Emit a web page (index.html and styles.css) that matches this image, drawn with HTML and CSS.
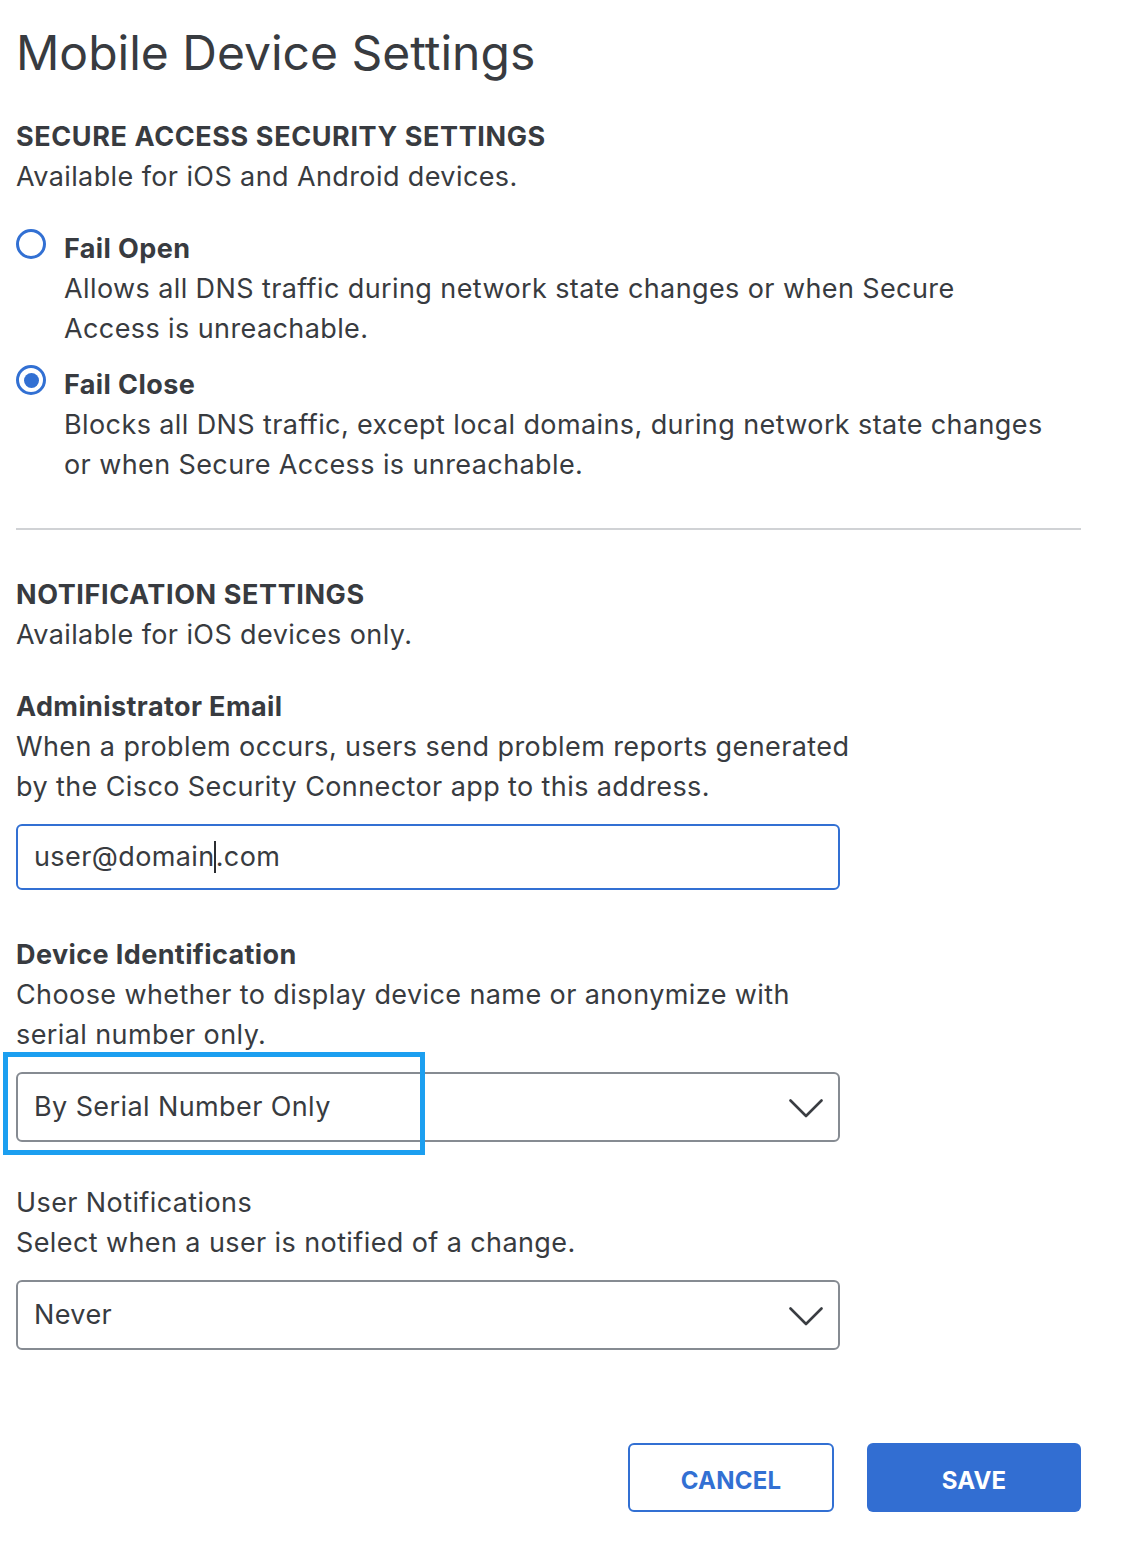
FILE: index.html
```html
<!DOCTYPE html>
<html lang="en">
<head>
<meta charset="utf-8">
<title>Mobile Device Settings</title>
<link rel="stylesheet" href="styles.css">
</head>
<body>
<main class="page">
  <h1 class="title">Mobile Device Settings</h1>

  <section class="section">
    <h2 class="section-title">SECURE ACCESS SECURITY SETTINGS</h2>
    <p class="text">Available for iOS and Android devices.</p>

    <div class="radio-group">
      <div class="radio-row">
        <span class="radio"></span>
        <div class="radio-body">
          <div class="label-bold">Fail Open</div>
          <p class="text">Allows all DNS traffic during network state changes or when Secure<br>Access is unreachable.</p>
        </div>
      </div>
      <div class="radio-row">
        <span class="radio checked"><span class="dot"></span></span>
        <div class="radio-body">
          <div class="label-bold">Fail Close</div>
          <p class="text">Blocks all DNS traffic, except local domains, during network state changes<br>or when Secure Access is unreachable.</p>
        </div>
      </div>
    </div>
  </section>

  <hr class="divider">

  <section class="section notif">
    <h2 class="section-title">NOTIFICATION SETTINGS</h2>
    <p class="text">Available for iOS devices only.</p>

    <div class="field">
      <div class="label-bold">Administrator Email</div>
      <p class="text">When a problem occurs, users send problem reports generated<br>by the Cisco Security Connector app to this address.</p>
      <div class="input focused">user@domain<span class="caret"></span>.com</div>
    </div>

    <div class="field">
      <div class="label-bold">Device Identification</div>
      <p class="text">Choose whether to display device name or anonymize with<br>serial number only.</p>
      <div class="select-wrap">
        <div class="select">
          <span>By Serial Number Only</span>
          <svg class="chev" width="34" height="19" viewBox="0 0 34 19"><path d="M1.5 1.5 L17 17 L32.5 1.5" fill="none" stroke="#3a3d42" stroke-width="2.6" stroke-linecap="round" stroke-linejoin="round"/></svg>
        </div>
        <div class="highlight"></div>
      </div>
    </div>

    <div class="field field-last">
      <div class="label-normal">User Notifications</div>
      <p class="text">Select when a user is notified of a change.</p>
      <div class="select">
        <span>Never</span>
        <svg class="chev" width="34" height="19" viewBox="0 0 34 19"><path d="M1.5 1.5 L17 17 L32.5 1.5" fill="none" stroke="#3a3d42" stroke-width="2.6" stroke-linecap="round" stroke-linejoin="round"/></svg>
      </div>
    </div>
  </section>

  <div class="actions">
    <button class="btn btn-outline">CANCEL</button>
    <button class="btn btn-primary">SAVE</button>
  </div>
</main>
</body>
</html>
```

FILE: styles.css
```css
html, body {
  margin: 0;
  padding: 0;
  background: #ffffff;
}

body {
  font-family: Inter, "Noto Sans", "Liberation Sans", sans-serif;
  color: #383b40;
  font-size: 27px;
  line-height: 40px;
  letter-spacing: 0.4px;
}

.page {
  width: 1065px;
  padding: 25px 0 0 16px;
}

.title {
  margin: 0;
  font-size: 48px;
  line-height: 56px;
  font-weight: 400;
  letter-spacing: 0;
}

.section {
  margin-top: 36px;
}

.section-title {
  margin: 0;
  font-size: 27px;
  line-height: 40px;
  font-weight: 700;
  letter-spacing: 0.6px;
}

.text {
  margin: 0;
  white-space: nowrap;
}

.radio-group {
  margin-top: 32px;
  display: flex;
  flex-direction: column;
  gap: 16px;
}

.radio-row {
  display: flex;
  align-items: flex-start;
  gap: 18px;
}

.radio {
  flex: none;
  width: 30px;
  height: 30px;
  margin-top: 0;
  box-sizing: border-box;
  border: 3px solid #3270d3;
  border-radius: 50%;
  display: flex;
  align-items: center;
  justify-content: center;
}

.radio .dot {
  width: 15px;
  height: 15px;
  border-radius: 50%;
  background: #3270d3;
}

.label-bold {
  font-weight: 700;
}

.label-normal {
  font-weight: 400;
}

.divider {
  margin: 43px 0 0 0;
  border: 0;
  height: 2px;
  background: #d0d2d5;
}

.notif {
  margin-top: 45px;
}

.field {
  margin-top: 32px;
}

.field + .field {
  margin-top: 45px;
}

.field-last {
  margin-top: 41px !important;
}

.input {
  margin-top: 17px;
  width: 824px;
  height: 66px;
  box-sizing: border-box;
  border: 2px solid #3270d3;
  border-radius: 6px;
  padding: 0 16px;
  display: flex;
  align-items: center;
}

.caret {
  display: inline-block;
  width: 2px;
  height: 32px;
  background: #2b2d31;
  margin: 0 0 0 -1px;
}

.select-wrap {
  position: relative;
  margin-top: 17px;
  width: 824px;
}

.select {
  width: 824px;
  height: 70px;
  box-sizing: border-box;
  border: 2px solid #868b92;
  border-radius: 6px;
  padding: 0 15px 0 16px;
  display: flex;
  align-items: center;
  justify-content: space-between;
}

.field-last .select {
  margin-top: 17px;
}

.chev {
  display: block;
  margin-top: 2px;
}

.highlight {
  position: absolute;
  left: -13px;
  top: -20px;
  width: 422px;
  height: 103px;
  box-sizing: border-box;
  border: 5px solid #1c9ff0;
  pointer-events: none;
}

.actions {
  margin-top: 93px;
  display: flex;
  justify-content: flex-end;
  gap: 33px;
}

.btn {
  font-family: Inter, "Noto Sans", "Liberation Sans", sans-serif;
  font-size: 24px;
  font-weight: 700;
  height: 69px;
  padding: 5px 0 0 0;
  border-radius: 6px;
  box-sizing: border-box;
  cursor: pointer;
  letter-spacing: 0.2px;
}

.btn-outline {
  width: 206px;
  background: #ffffff;
  color: #3270d3;
  border: 2px solid #3270d3;
}

.btn-primary {
  width: 214px;
  background: #326ed2;
  color: #ffffff;
  border: 0;
}
```
